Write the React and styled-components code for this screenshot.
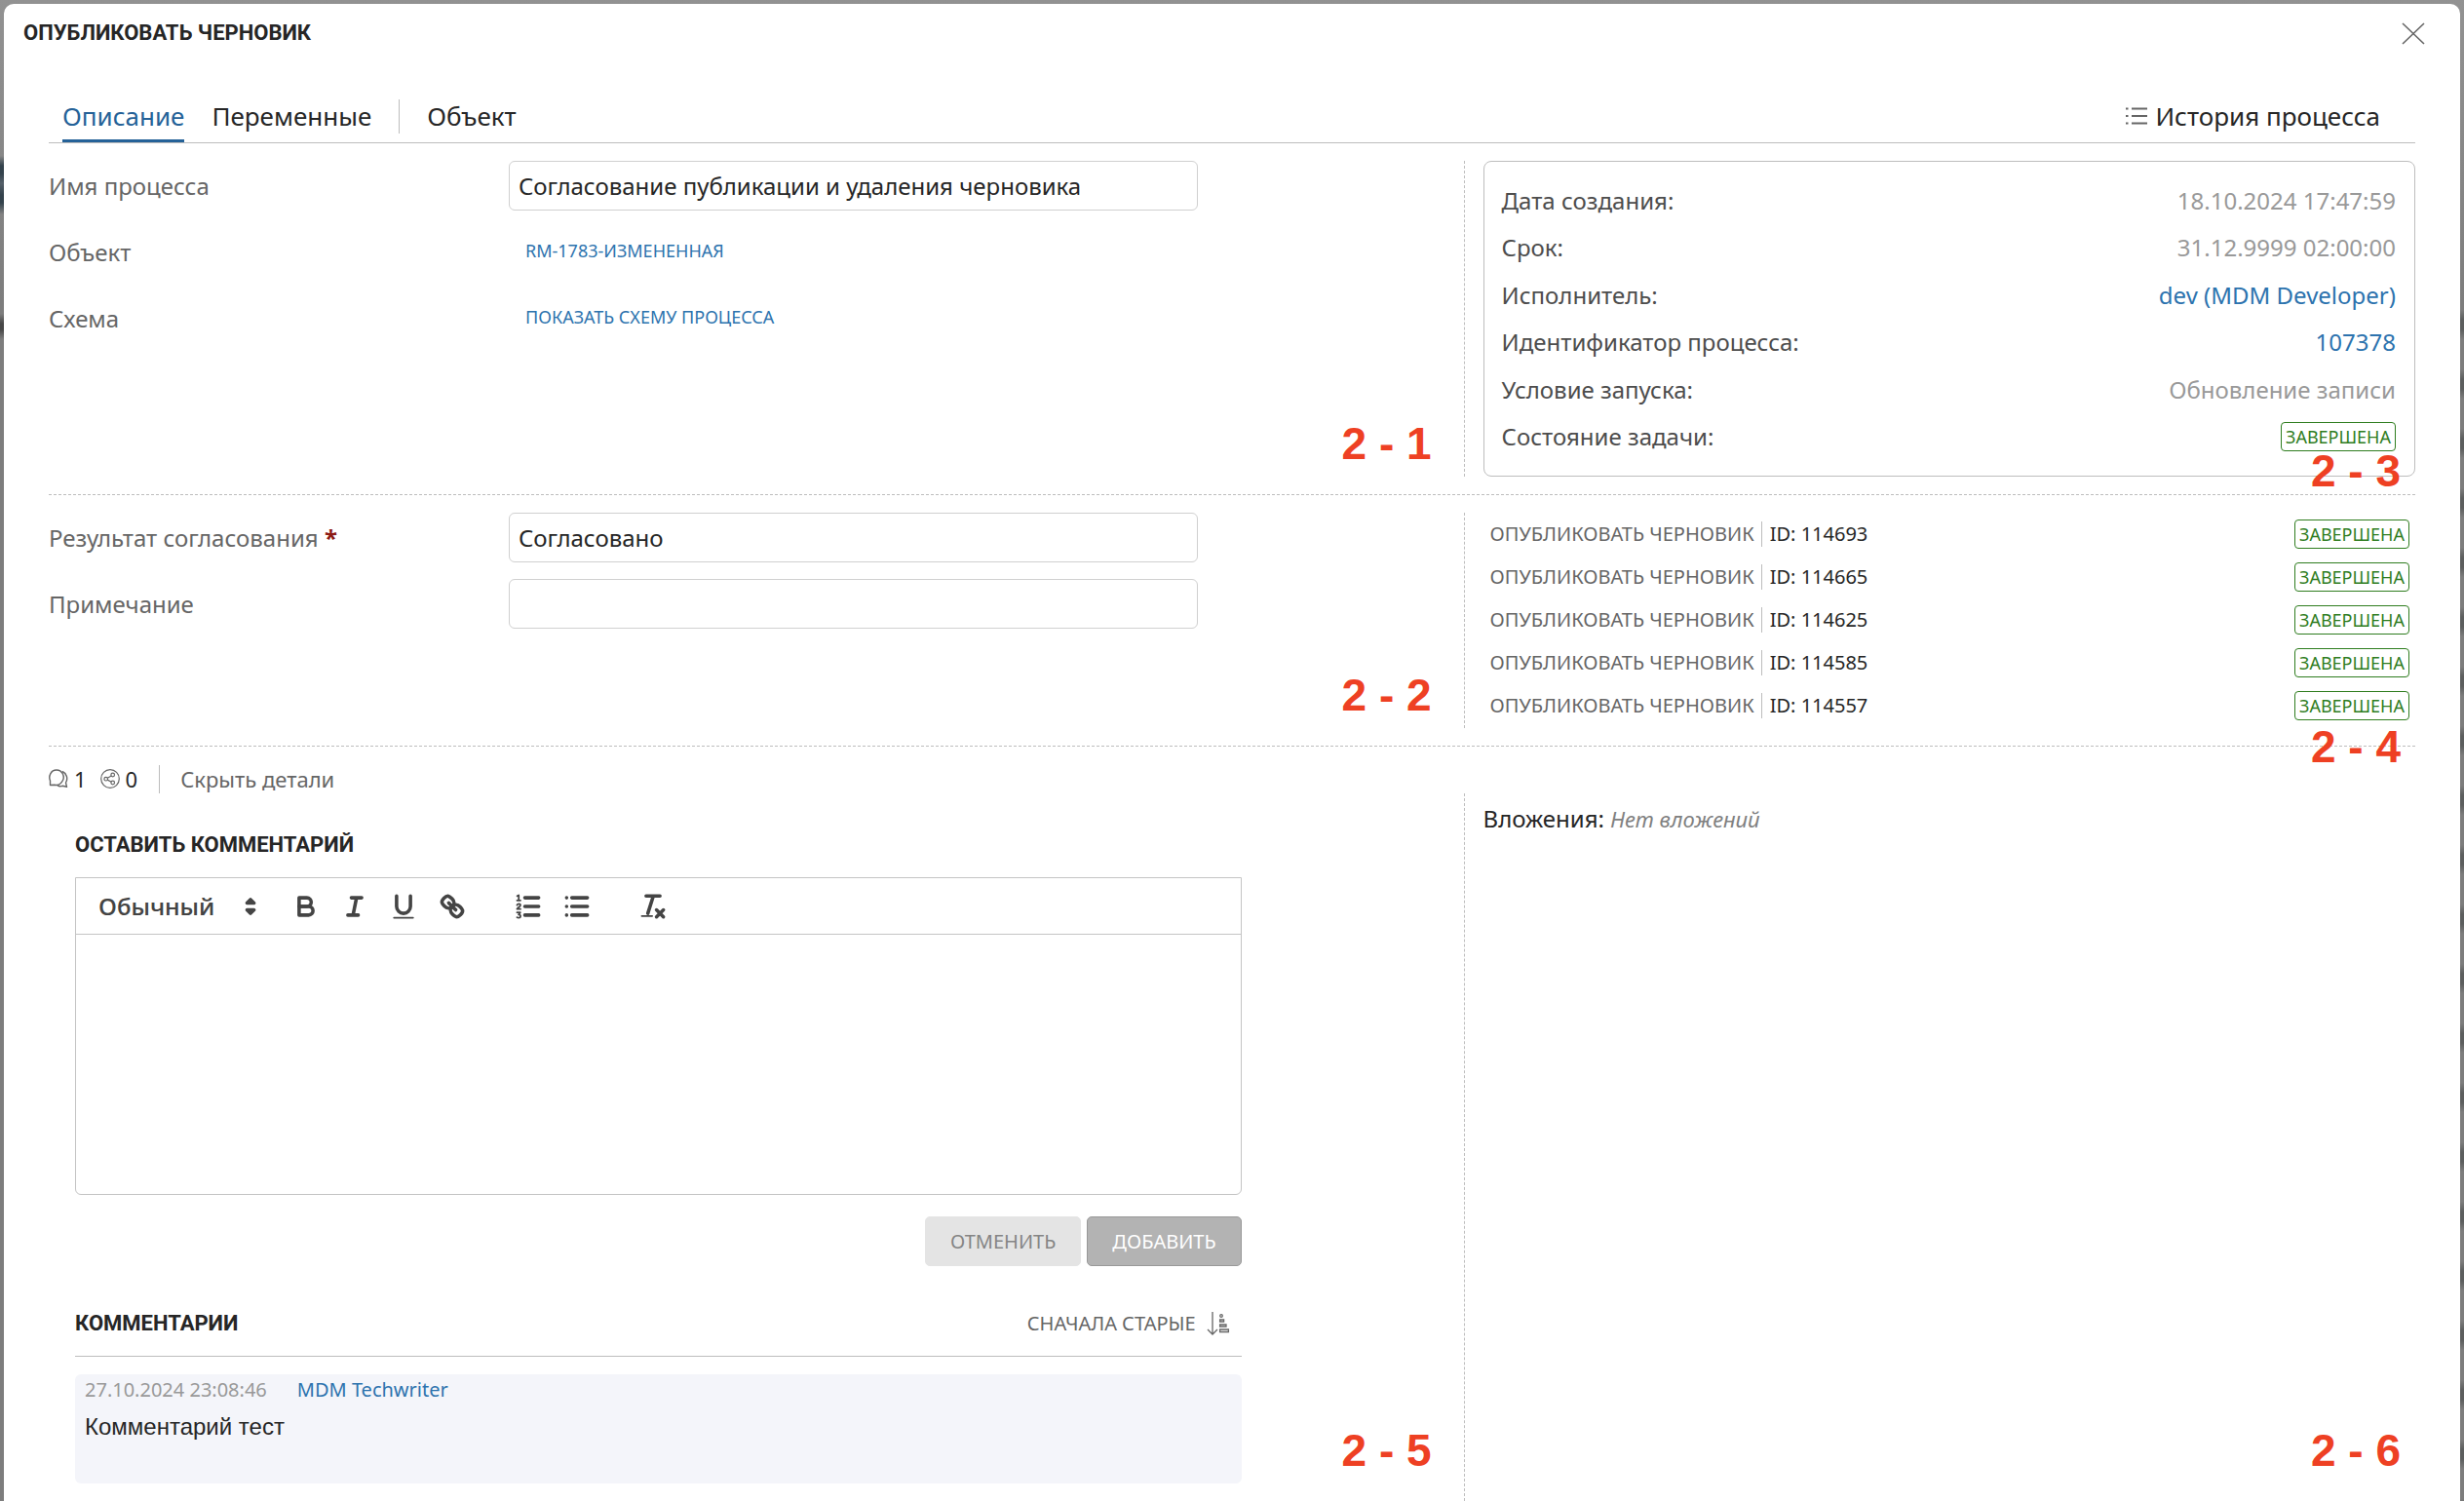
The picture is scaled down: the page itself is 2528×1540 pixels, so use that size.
import React, { useState } from 'react';
import styled, { createGlobalStyle } from 'styled-components';

const GlobalStyle = createGlobalStyle`
  * { box-sizing: border-box; }
  html, body, #root { height: 100%; }
  body {
    margin: 0;
    overflow: hidden;
    background: #808080;
    color: #262626;
    font-family: 'Noto Sans', 'Open Sans', sans-serif;
    font-size: 24px;
    line-height: 32px;
  }
  button, input, select, textarea { font: inherit; color: inherit; }
  button { cursor: pointer; }
`;

const Backdrop = styled.div`
  height: 100%;
  padding: 4px 4px 0;
  background:
    linear-gradient(transparent 160px, #33424c 170px, #33424c 178px, #55606a 188px, #33424c 200px, #33424c 208px, transparent 220px, transparent 322px, #474747 332px, #474747 338px, transparent 348px) left / 4px 100% no-repeat,
    repeating-linear-gradient(transparent 0 18px, #5c5e5e 28px 38px, transparent 48px 61px) right 300px / 4px 100% no-repeat,
    linear-gradient(#929292, #7d7d7d 20%, #7d7d7d);
`;

const Modal = styled.main`
  display: flex;
  flex-direction: column;
  height: 100%;
  background: #fff;
  border-radius: 10px 10px 0 0;
`;

const ModalHeader = styled.header`
  display: flex;
  align-items: center;
  justify-content: space-between;
  height: 60px;
  padding: 0 36px 0 20px;
`;

const Heading = styled.h2`
  margin: 0;
  font-family: 'Liberation Sans Narrow', Roboto, sans-serif;
  font-size: 22px;
  font-weight: 700;
  line-height: 32px;
`;

const IconButton = styled.button`
  display: flex;
  padding: 0;
  border: 0;
  background: none;
`;

const Body = styled.div`
  display: flex;
  flex: 1;
  flex-direction: column;
  min-height: 0;
  padding: 36px 46px 0;
`;

const TabBar = styled.nav`
  display: flex;
  align-items: flex-start;
  height: 47px;
  padding: 0 36px 0 14px;
  border-bottom: 1px solid #bdbdbd;
  font-size: 26px;
`;

const Tab = styled.button`
  height: 46px;
  margin-right: 28px;
  padding: 0 0 6px;
  border: 0;
  border-bottom: 3px solid ${(p) => (p.$active ? '#256298' : 'transparent')};
  background: none;
  color: ${(p) => (p.$active ? '#256298' : '#262626')};
`;

const Divider = styled.span`
  width: 1px;
  height: ${(p) => p.$height}px;
  background: #bdbdbd;
`;

const TabDivider = styled(Divider)`
  margin: 2px 28px 0 0;
`;

const HistoryButton = styled(IconButton)`
  align-items: center;
  gap: 8px;
  height: 38px;
  margin-left: auto;
`;

const Section = styled.section`
  display: grid;
  grid-template-columns: 1451fr 976fr;
  padding: 18px 0;
  border-bottom: 1px dashed #bdbdbd;
  min-height: ${(p) => p.$height}px;
`;

const Pane = styled.div`
  position: relative;
`;

const SidePane = styled.div`
  position: relative;
  padding-left: 19px;
  border-left: 1px dashed #bdbdbd;
`;

const Mark = styled.span`
  position: absolute;
  right: ${(p) => p.$right}px;
  bottom: ${(p) => p.$bottom}px;
  color: #ee4023;
  font: 700 46px/46px 'Liberation Sans', Arial, sans-serif;
`;

const FieldRow = styled.div`
  display: grid;
  grid-template-columns: 472px 707px;
  align-items: center;
  height: 51px;
  margin-bottom: 17px;
  color: #666;
`;

const TextInput = styled.input`
  width: 100%;
  height: 51px;
  padding: 0 9px;
  border: 1px solid #d0d0d0;
  border-radius: 6px;
  background: #fff;
  color: #262626;
  outline: none;
`;

const Required = styled.b`
  color: #8d1a14;
`;

const Link = styled.a`
  color: #2d73ae;
  text-decoration: none;
`;

const FieldLink = styled(Link)`
  padding: 0 0 4px 17px;
  font-size: 18px;
`;

const InfoCard = styled.dl`
  display: flex;
  flex-direction: column;
  justify-content: space-between;
  height: 324px;
  margin: 0;
  padding: 23px 19px 23px 18px;
  border: 1px solid #bdbdbd;
  border-radius: 8px;
`;

const InfoRow = styled.div`
  display: flex;
  align-items: center;
  justify-content: space-between;
  height: 34px;
`;

const Term = styled.dt`
  color: #4d4d4d;
`;

const Value = styled.dd`
  margin: 0;
  color: #999;
`;

const Badge = styled.span`
  display: block;
  padding: 0 4px;
  border: 1px solid #2f7d1f;
  border-radius: 4px;
  color: #2f7d1f;
  font-size: 18px;
  line-height: 28px;
`;

const TaskList = styled.ul`
  margin: 0;
  padding: 0 6px 0 7px;
  list-style: none;
  font-size: 20px;
`;

const TaskRow = styled.li`
  display: flex;
  align-items: center;
  height: 44px;
  color: #666;

  ${Divider} { margin: 0 8px 0 7px; }
  ${Badge} { margin-left: auto; }
`;

const TaskId = styled.span`
  color: #262626;
`;

const CountBar = styled.div`
  display: flex;
  align-items: center;
  height: 48px;
  padding-top: 18px;
  font-size: 22px;
  line-height: 30px;
`;

const Count = styled.span`
  display: flex;
  align-items: center;
  gap: 6px;
  margin-right: 14px;
`;

const CountDivider = styled(Divider)`
  margin: 0 21px 0 8px;
`;

const DetailsToggle = styled(IconButton)`
  color: #666;
`;

const Details = styled.section`
  display: grid;
  flex: 1;
  grid-template-columns: 1451fr 976fr;
  min-height: 0;
`;

const CommentPane = styled(Pane)`
  padding: 37px 228px 0 27px;
`;

const Editor = styled.div`
  height: 326px;
  margin-top: 17px;
  border: 1px solid #c4c4c4;
  border-radius: 0 0 6px 6px;
`;

const Toolbar = styled.div`
  display: flex;
  align-items: center;
  height: 58px;
  padding-left: 23px;
  border-bottom: 1px solid #c4c4c4;
`;

const Picker = styled.div`
  position: relative;
  width: 172px;
  margin-right: 16px;
  color: #444;

  svg {
    position: absolute;
    top: 0;
    right: 0;
    pointer-events: none;
  }
`;

const PickerSelect = styled.select`
  display: block;
  width: 100%;
  height: 32px;
  padding: 0 0 2px;
  border: 0;
  appearance: none;
  background: none;
  font-family: 'Open Sans', sans-serif;
  font-weight: 600;
  outline: none;
`;

const ToolGroup = styled.div`
  display: flex;
  margin-right: 28px;
`;

const ToolButton = styled(IconButton)`
  padding: 0 9px;
`;

const EditorText = styled.textarea`
  display: block;
  width: 100%;
  height: 260px;
  padding: 20px 24px;
  border: 0;
  background: none;
  outline: none;
  resize: none;
`;

const Actions = styled.div`
  display: flex;
  justify-content: flex-end;
  gap: 6px;
  margin-top: 22px;
`;

const Button = styled.button`
  height: 51px;
  padding: 0 25px;
  border: 1px solid ${(p) => (p.$primary ? '#999' : '#e4e4e4')};
  border-radius: 5px;
  background: ${(p) => (p.$primary ? '#b3b3b3' : '#e4e4e4')};
  color: ${(p) => (p.$primary ? '#fff' : '#858585')};
  font-size: 20px;
`;

const CommentsHead = styled.div`
  display: flex;
  align-items: center;
  justify-content: space-between;
  height: 68px;
  margin-top: 25px;
  padding-right: 12px;
  border-bottom: 1px solid #bdbdbd;
`;

const SortButton = styled(IconButton)`
  align-items: center;
  gap: 11px;
  color: #666;
  font-size: 20px;
`;

const Comment = styled.article`
  height: 112px;
  margin-top: 18px;
  padding: 0 10px;
  border-radius: 6px;
  background: #f4f5fa;
`;

const CommentMeta = styled.div`
  display: flex;
  gap: 31px;
  color: #999;
  font-size: 20px;
  line-height: 32px;
`;

const CommentText = styled.p`
  margin: 6px 0 0;
  font-family: 'Liberation Sans', Arial, sans-serif;
`;

const Attachments = styled.p`
  margin: 10px 0 0;
`;

const Empty = styled.em`
  color: #808080;
  font-size: 22px;
`;

const QuillIcon = ({ children }) => (
  <svg
    width="32"
    height="32"
    viewBox="0 0 18 18"
    fill="none"
    stroke="#444"
    strokeWidth="2"
    strokeLinecap="round"
    strokeLinejoin="round"
  >
    {children}
  </svg>
);

const CloseIcon = () => (
  <svg width="24" height="24" viewBox="0 0 24 24" stroke="#666" strokeWidth="1.6">
    <path d="M1 2 23 23M23 2 1 23" />
  </svg>
);

const HistoryIcon = () => (
  <svg width="22" height="20" viewBox="0 0 22 20" stroke="#666" strokeWidth="1.8">
    <path d="M6 2.5h16M6 10h16M6 17.5h16M0 2.5h2.5M0 10h2.5M0 17.5h2.5" />
  </svg>
);

const ChatIcon = () => (
  <svg width="20" height="20" viewBox="0 0 20 20" fill="none" stroke="#666" strokeWidth="1.4" strokeLinejoin="round">
    <path d="M1.500 16.500V12C-.5 7.500 2 1 8 1s8.500 6.500 6.500 10.500S9 17 6 16.200Z" />
    <path d="M14 2.500c4.500 2 6 7.500 3.500 11.500l1 4.300-4.500-1c-1.500.5-3.500.5-5-.5" />
  </svg>
);

const ShareIcon = () => (
  <svg width="20" height="20" viewBox="0 0 20 20" fill="none" stroke="#666" strokeWidth="1.2">
    <circle cx="10" cy="10" r="9.300" />
    <circle cx="5.700" cy="10.200" r="1.800" />
    <circle cx="12.700" cy="6" r="1.800" />
    <circle cx="12.700" cy="14" r="1.800" />
    <path d="m7.300 9.300 3.900-2.400M7.300 11.100l3.900 2.100" />
  </svg>
);

const SortIcon = () => (
  <svg width="24" height="24" viewBox="0 0 24 24" fill="none" stroke="#666" strokeWidth="1.300">
    <path d="M6 0v23M1 18l5 5 5-5" />
    <circle cx="15" cy="4" r="1.300" />
    <path d="M13.600 8h4v2h-4zM13.600 13h6.400v2h-6.400zM13.600 18h8.800v2.500h-8.800z" />
  </svg>
);

const BoldIcon = () => (
  <QuillIcon>
    <path d="M5,4H9.500A2.500,2.500,0,0,1,12,6.500v0A2.500,2.500,0,0,1,9.500,9H5A0,0,0,0,1,5,9V4A0,0,0,0,1,5,4Z" />
    <path d="M5,9h5.500A2.500,2.500,0,0,1,13,11.500v0A2.500,2.500,0,0,1,10.500,14H5a0,0,0,0,1,0,0V9A0,0,0,0,1,5,9Z" />
  </QuillIcon>
);

const ItalicIcon = () => (
  <QuillIcon>
    <path d="M7 4h6M5 14h6M8 14l2-10" />
  </QuillIcon>
);

const UnderlineIcon = () => (
  <QuillIcon>
    <path d="M5,3V9a4.012,4.012,0,0,0,4,4H9a4.012,4.012,0,0,0,4-4V3" />
    <rect x="3" y="15" width="12" height="1" rx=".5" fill="#444" stroke="none" />
  </QuillIcon>
);

const LinkIcon = () => (
  <QuillIcon>
    <path d="M7 7l4 4" />
    <path d="M8.900,4.577a3.476,3.476,0,0,1,.36,4.679A3.476,3.476,0,0,1,4.577,8.900C3.185,7.500,2.035,6.400,4.217,4.217S7.500,3.185,8.900,4.577Z" />
    <path d="M13.423,9.100a3.476,3.476,0,0,0-4.679-.36,3.476,3.476,0,0,0,.36,4.679c1.392,1.392,2.500,2.542,4.679.36S14.815,10.500,13.423,9.100Z" />
  </QuillIcon>
);

const OrderedIcon = () => (
  <QuillIcon>
    <path d="M7 4h8M7 9h8M7 14h8" />
    <path strokeWidth="1" d="M2.500 5.500h2M3.500 5.500v-3l-.9.500M2.500 8.200c.4-.9 2-.8 2 .1 0 .8-1.600 1.300-2 2.200h2M2.500 12.500h1.900l-1 1.200c1.600 0 1.400 1.900 0 1.900-.4 0-.7-.1-.9-.3" />
  </QuillIcon>
);

const BulletIcon = () => (
  <QuillIcon>
    <path d="M6 4h9M6 9h9M6 14h9M3 4h0M3 9h0M3 14h0" />
  </QuillIcon>
);

const CleanIcon = () => (
  <QuillIcon>
    <path d="M5 3h8M6 13 9 3.500M11 11l4 4M15 11l-4 4" />
    <rect x="2" y="14" width="7" height="1" rx=".5" fill="#444" stroke="none" />
  </QuillIcon>
);

const toolGroups = [
  [
    ['Полужирный', BoldIcon],
    ['Курсив', ItalicIcon],
    ['Подчеркнутый', UnderlineIcon],
    ['Ссылка', LinkIcon],
  ],
  [
    ['Нумерованный список', OrderedIcon],
    ['Маркированный список', BulletIcon],
  ],
  [['Очистить', CleanIcon]],
];

const info = [
  ['Дата создания:', '18.10.2024 17:47:59'],
  ['Срок:', '31.12.9999 02:00:00'],
  ['Исполнитель:', <Link href="#user">dev (MDM Developer)</Link>],
  ['Идентификатор процесса:', <Link href="#process">107378</Link>],
  ['Условие запуска:', 'Обновление записи'],
  ['Состояние задачи:', <Badge>ЗАВЕРШЕНА</Badge>],
];

const tasks = [114693, 114665, 114625, 114585, 114557];

const App = () => {
  const [tab, setTab] = useState('Описание');
  const [name, setName] = useState('Согласование публикации и удаления черновика');
  const [result, setResult] = useState('Согласовано');
  const [note, setNote] = useState('');
  const [comment, setComment] = useState('');

  const renderTab = (title) => (
    <Tab type="button" $active={tab === title} onClick={() => setTab(title)}>{title}</Tab>
  );

  return (
    <Backdrop>
      <GlobalStyle />
      <Modal>
        <ModalHeader>
          <Heading>ОПУБЛИКОВАТЬ ЧЕРНОВИК</Heading>
          <IconButton type="button" aria-label="Закрыть"><CloseIcon /></IconButton>
        </ModalHeader>
        <Body>
          <TabBar>
            {renderTab('Описание')}
            {renderTab('Переменные')}
            <TabDivider $height={35} />
            {renderTab('Объект')}
            <HistoryButton type="button">
              <HistoryIcon />
              История процесса
            </HistoryButton>
          </TabBar>

          <Section $height={360}>
            <Pane>
              <FieldRow>
                <label htmlFor="name">Имя процесса</label>
                <TextInput id="name" value={name} onChange={(e) => setName(e.target.value)} />
              </FieldRow>
              <FieldRow>
                <span>Объект</span>
                <FieldLink href="#object">RM-1783-ИЗМЕНЕННАЯ</FieldLink>
              </FieldRow>
              <FieldRow>
                <span>Схема</span>
                <FieldLink href="#schema">ПОКАЗАТЬ СХЕМУ ПРОЦЕССА</FieldLink>
              </FieldRow>
              <Mark $right={33} $bottom={11}>2 - 1</Mark>
            </Pane>
            <SidePane>
              <InfoCard>
                {info.map(([term, value]) => (
                  <InfoRow key={term}>
                    <Term>{term}</Term>
                    <Value>{value}</Value>
                  </InfoRow>
                ))}
              </InfoCard>
              <Mark $right={15} $bottom={-17}>2 - 3</Mark>
            </SidePane>
          </Section>

          <Section $height={258}>
            <Pane>
              <FieldRow>
                <label htmlFor="result">Результат согласования <Required>*</Required></label>
                <TextInput id="result" value={result} onChange={(e) => setResult(e.target.value)} />
              </FieldRow>
              <FieldRow>
                <label htmlFor="note">Примечание</label>
                <TextInput id="note" value={note} onChange={(e) => setNote(e.target.value)} />
              </FieldRow>
              <Mark $right={33} $bottom={11}>2 - 2</Mark>
            </Pane>
            <SidePane>
              <TaskList>
                {tasks.map((id) => (
                  <TaskRow key={id}>
                    <span>ОПУБЛИКОВАТЬ ЧЕРНОВИК</span>
                    <Divider $height={26} />
                    <TaskId>ID: {id}</TaskId>
                    <Badge>ЗАВЕРШЕНА</Badge>
                  </TaskRow>
                ))}
              </TaskList>
              <Mark $right={15} $bottom={-42}>2 - 4</Mark>
            </SidePane>
          </Section>

          <CountBar>
            <Count><ChatIcon />1</Count>
            <Count><ShareIcon />0</Count>
            <CountDivider $height={29} />
            <DetailsToggle type="button">Скрыть детали</DetailsToggle>
          </CountBar>

          <Details>
            <CommentPane>
              <Heading>ОСТАВИТЬ КОММЕНТАРИЙ</Heading>
              <Editor>
                <Toolbar>
                  <Picker>
                    <PickerSelect aria-label="Стиль текста">
                      <option>Обычный</option>
                    </PickerSelect>
                    <QuillIcon>
                      <path fill="#444" d="M7 11l2 2 2-2zM7 7l2-2 2 2z" />
                    </QuillIcon>
                  </Picker>
                  {toolGroups.map((group) => (
                    <ToolGroup key={group[0][0]}>
                      {group.map(([label, Icon]) => (
                        <ToolButton key={label} type="button" aria-label={label}><Icon /></ToolButton>
                      ))}
                    </ToolGroup>
                  ))}
                </Toolbar>
                <EditorText aria-label="Комментарий" value={comment} onChange={(e) => setComment(e.target.value)} />
              </Editor>
              <Actions>
                <Button type="button">ОТМЕНИТЬ</Button>
                <Button type="button" $primary>ДОБАВИТЬ</Button>
              </Actions>
              <CommentsHead>
                <Heading>КОММЕНТАРИИ</Heading>
                <SortButton type="button">
                  СНАЧАЛА СТАРЫЕ
                  <SortIcon />
                </SortButton>
              </CommentsHead>
              <Comment>
                <CommentMeta>
                  <time>27.10.2024 23:08:46</time>
                  <Link href="#author">MDM Techwriter</Link>
                </CommentMeta>
                <CommentText>Комментарий тест</CommentText>
              </Comment>
              <Mark $right={33} $bottom={29}>2 - 5</Mark>
            </CommentPane>
            <SidePane>
              <Attachments>Вложения: <Empty>Нет вложений</Empty></Attachments>
              <Mark $right={15} $bottom={29}>2 - 6</Mark>
            </SidePane>
          </Details>
        </Body>
      </Modal>
    </Backdrop>
  );
};

export default App;
